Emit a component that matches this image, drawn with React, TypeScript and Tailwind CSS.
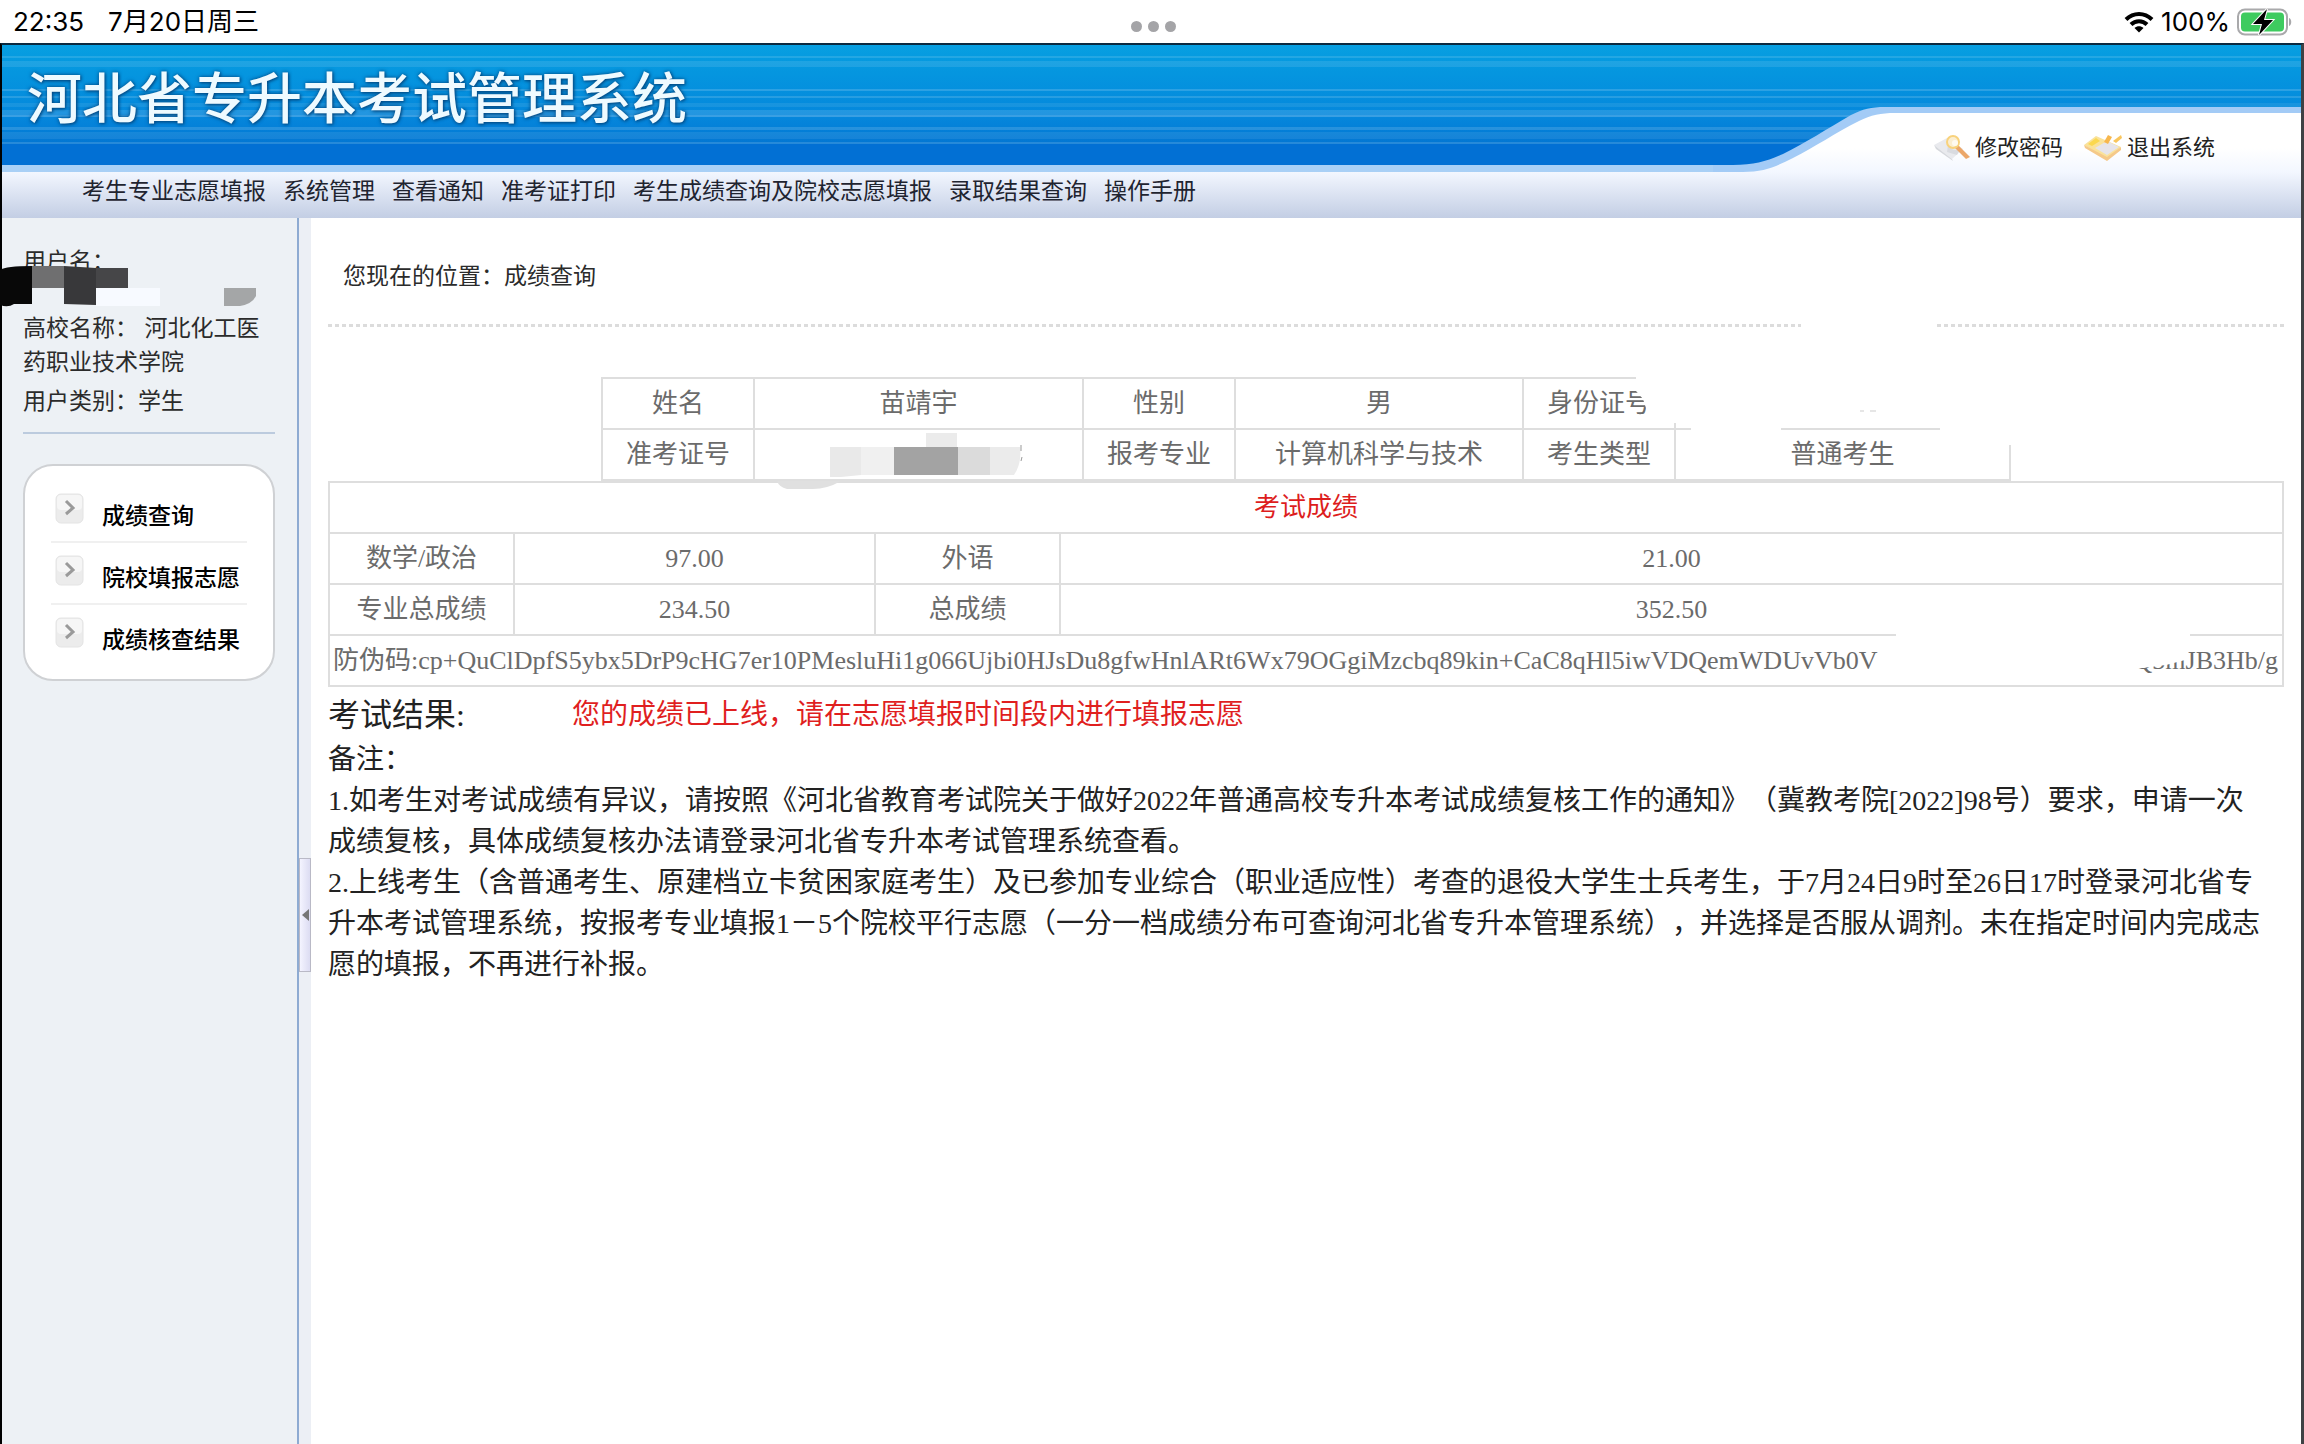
import type { ReactNode } from "react";
import { clsx } from "clsx";

const NAV_ITEMS = [
  "考生专业志愿填报",
  "系统管理",
  "查看通知",
  "准考证打印",
  "考生成绩查询及院校志愿填报",
  "录取结果查询",
  "操作手册",
];

const MENU_ITEMS = ["成绩查询", "院校填报志愿", "成绩核查结果"];

// thin highlights that run across the banner: [top, height, opacity]
const STRIPES = [
  [11, 2, 0.12],
  [16, 6, 0.1],
  [44, 2, 0.16],
  [51, 2, 0.14],
  [58, 4, 0.08],
  [65, 7, 0.12],
  [70, 2, 0.1],
  [82, 3, 0.14],
  [87, 7, 0.08],
  [97, 2, 0.14],
];

function StatusBar() {
  return (
    <div className="grid h-[43px] grid-cols-3 items-start bg-white pr-[11px] pl-[13px] text-[26px] leading-[44px] text-black">
      <div className="flex gap-6">
        <span>22:35</span>
        <span>7月20日周三</span>
      </div>
      <div className="flex justify-center gap-1.5 pt-[21px]">
        <span className="size-[11px] rounded-full bg-[#a4a4a7]" />
        <span className="size-[11px] rounded-full bg-[#a4a4a7]" />
        <span className="size-[11px] rounded-full bg-[#a4a4a7]" />
      </div>
      <div className="flex items-center justify-end gap-[7px]">
        <svg width="30" height="22" viewBox="0 0 30 22" fill="none" stroke="#000" strokeWidth="4">
          <path d="M2 8.5C9.500 1 20.500 1 28 8.500" />
          <path d="M7 13.500C11.500 9 18.500 9 23 13.500" />
          <path d="M15 21.500L10.500 17C13 14.600 17 14.600 19.500 17Z" fill="#000" stroke="none" />
        </svg>
        <span>100%</span>
        <svg width="56" height="28" viewBox="0 0 56 28">
          <rect x="1" y="1.500" width="49" height="25" rx="7" fill="#fff" stroke="#a9a9ab" strokeWidth="2" />
          <rect x="4" y="4.500" width="43" height="19" rx="4" fill="#3ecb5f" />
          <path d="M52 10C55 11 55 17 52 18Z" fill="#a9a9ab" />
          <path d="M30 1L16 16H25L22 27L36 12H27Z" fill="#000" stroke="#fff" strokeWidth="2" paintOrder="stroke" />
        </svg>
      </div>
    </div>
  );
}

function KeyIcon() {
  return (
    <svg width="38" height="28" viewBox="0 0 38 28">
      <path d="M1 12L14 5L30 16L19 26Z" fill="#e9eaee" />
      <path d="M1 12L19 26L20 28L3 16Z" fill="#d6d8dd" />
      <path d="M15 12C18 17 22 18 27 16L24 22L14 19Z" fill="#d9dbe0" />
      <path d="M25 12L37 24L33 26L22 15Z" fill="#eba76a" />
      <circle cx="20" cy="9" r="6" fill="#fbeed0" stroke="#f8d27c" strokeWidth="2" />
      <circle cx="22" cy="10" r="3" fill="#fffaf0" />
    </svg>
  );
}

function ExitIcon() {
  return (
    <svg width="40" height="28" viewBox="0 0 40 28">
      <path d="M1 12L13 3L38 14L24 27Z" fill="#fae29a" />
      <path d="M1 12L24 24L38 14V17L24 28L2 15Z" fill="#f5c98a" />
      <path d="M12 15L24 8L36 14L24 22Z" fill="#e6e4ea" />
      <path d="M5 11L13 5L17 8L9 13Z" fill="#fbd84e" />
      <path d="M21 9L25 2L29 4L25 11Z" fill="#f7b74e" />
      <path d="M30 8L38 2L39 5L33 10Z" fill="#f9c55c" />
    </svg>
  );
}

function HeaderLink({ icon, label }: { icon: ReactNode; label: string }) {
  return (
    <a href="#" className="flex items-center gap-1 text-[22px] leading-7 text-[#222]">
      {icon}
      {label}
    </a>
  );
}

function Header() {
  return (
    <header className="relative">
      <div className="relative h-[127px] border-b-[7px] border-[#a9d0f6] bg-linear-to-b from-[#079fe1] from-0% via-[#0587dc] via-60% to-[#0469cb]">
        <svg className="absolute inset-0 h-[120px] w-full">
          <rect y="99" width="100%" height="21" fill="#0270d4" />
          {STRIPES.map(([y, h, o]) => (
            <rect key={y} y={y} width="100%" height={h} fill="#fff" opacity={o} />
          ))}
        </svg>
      </div>
      {/* raised tab that holds the account links */}
      <svg className="absolute top-0 right-0" width="638" height="127" viewBox="0 0 638 127">
        <defs>
          <linearGradient id="tab" x1="0" y1="0" x2="0" y2="1">
            <stop offset="0.600" stopColor="#fff" />
            <stop offset="1" stopColor="#f3f7ff" />
          </linearGradient>
        </defs>
        <path
          d="M50 120H70C92 120 104 116 120 109C142 98 164 84 188 70C200 64 208 62 222 62H638V127H50Z"
          fill="#a3cbf6"
        />
        <path
          d="M80 127C102 127 114 121 130 113C152 102 172 88 196 76C208 70 218 68 232 68H638V127Z"
          fill="url(#tab)"
        />
      </svg>
      <div className="absolute inset-x-0 top-0 flex h-[127px] justify-between pr-[86px] pl-[25px]">
        <h1 className="pt-[17px] text-[55px] leading-[72px] font-medium text-[#eefaff] [text-shadow:0_0_4px_#044c86,1px_1px_3px_#044c86]">
          河北省专升本考试管理系统
        </h1>
        <div className="flex items-start gap-5 pt-[88px]">
          <HeaderLink icon={<KeyIcon />} label="修改密码" />
          <HeaderLink icon={<ExitIcon />} label="退出系统" />
        </div>
      </div>
      <nav className="flex h-[46px] gap-[17px] bg-linear-to-b from-[#f3f7ff] to-[#c3cee4] pl-20 text-[23px] leading-[38px] text-[#1f2430]">
        {NAV_ITEMS.map((item) => (
          <a key={item} href="#">
            {item}
          </a>
        ))}
      </nav>
    </header>
  );
}

function Sidebar() {
  return (
    <aside className="w-[295px] shrink-0 bg-[#edf1f5] pt-[26px] pr-[22px] pl-[21px] text-[23px] text-[#2b2b2b]">
      <div className="relative h-[67px] leading-[34px]">
        用户名：
        <svg className="absolute top-[22px] -left-[23px]" width="262" height="42" viewBox="0 0 262 42">
          <path d="M0 4Q6 0 32 0V38H14Q8 42 0 39Z" fill="#080808" />
          <path d="M32 0H64V22H32Z" fill="#6f6f70" />
          <path d="M64 0L96 2V39L64 38Z" fill="#38383a" />
          <path d="M96 2H128V22H96Z" fill="#464648" />
          <path d="M96 22H160V40H96Z" fill="#f7faff" />
          <path d="M224 22H256V30Q252 38 240 40H224Z" fill="#a4a6a7" />
        </svg>
      </div>
      <p className="leading-[34px]">高校名称： 河北化工医药职业技术学院</p>
      <p className="mt-[5px] leading-[34px]">用户类别：学生</p>
      <hr className="mt-3.5 border-t-2 border-[#bccbde]" />
      <ul className="mt-[30px] rounded-[30px] border-2 border-[#cfd1d4] bg-white px-[26px] pt-[15px] pb-3 font-medium text-black">
        {MENU_ITEMS.map((item, i) => (
          <li
            key={item}
            className={clsx("h-[62px]", i < MENU_ITEMS.length - 1 && "border-b-2 border-[#f0f0f0]")}
          >
            <a href="#" className="flex gap-[18px] pt-3 pl-1">
              <svg width="29" height="31" viewBox="0 0 29 31" className="shrink-0">
                <rect x="1" y="1" width="27" height="29" rx="5" fill="#ececec" stroke="#e4e4e4" />
                <rect x="2" y="2" width="25" height="15" rx="4" fill="#f6f6f6" />
                <path d="M11 8L18 15L11 21" fill="none" stroke="#9a9a9a" strokeWidth="3" />
              </svg>
              <span className="pt-1.5 leading-[34px] whitespace-nowrap">{item}</span>
            </a>
          </li>
        ))}
      </ul>
    </aside>
  );
}

function Cell({ children, className }: { children?: ReactNode; className?: string }) {
  return <td className={clsx("border-2 border-[#dedede] p-0", className)}>{children}</td>;
}

function Label({ children, className }: { children: ReactNode; className?: string }) {
  return (
    <th scope="row" className={clsx("border-2 border-[#dedede] p-0 font-normal", className)}>
      {children}
    </th>
  );
}

function CandidateTable() {
  return (
    <div className="relative mx-auto w-[1410px]">
      <table className="w-full table-fixed border-collapse text-center">
        <tbody>
          <tr className="h-[51px]">
            <Label className="w-[152px]">姓名</Label>
            <Cell className="w-[329px]">苗靖宇</Cell>
            <Label className="w-[152px]">性别</Label>
            <Cell className="w-[288px]">男</Cell>
            <Label className="w-[152px]">身份证号</Label>
            <Cell />
          </tr>
          <tr className="h-[51px]">
            <Label>准考证号</Label>
            <Cell />
            <Label>报考专业</Label>
            <Cell>计算机科学与技术</Cell>
            <Label>考生类型</Label>
            <Cell>普通考生</Cell>
          </tr>
        </tbody>
      </table>
      {/* blanked-out ID number and pixelated ticket number */}
      <svg className="absolute inset-0 overflow-visible" width="1410" height="104" viewBox="0 0 1410 104">
        <path
          d="M1035 -4V14L1042 22L1048 40V46H1090V58H1180V46H1339V68H1415V-4Z"
          fill="#fff"
        />
        <path d="M1259 34H1263M1269 34H1275" stroke="#e6e6e6" strokeWidth="2" />
        <path d="M325 56H356V70H325Z" fill="#ebebeb" />
        <path d="M229 70H260V98L240 100H229Z" fill="#e9e9e9" />
        <path d="M260 70H293V98H260Z" fill="#f0f0f0" />
        <path d="M293 70H357V98H293Z" fill="#a3a3a3" />
        <path d="M357 70H389V98H357Z" fill="#dbdbdb" />
        <path d="M389 70H419Q421 86 413 98H389Z" fill="#ebebeb" />
        <path d="M420 68V74M421 80L420 84" stroke="#999" strokeWidth="1" />
        <path d="M176 104H240Q226 112 212 112H186Q178 110 176 104Z" fill="#e0e0e0" />
      </svg>
    </div>
  );
}

function ScoreTable() {
  return (
    <table className="w-full table-fixed border-collapse text-center">
      <colgroup>
        <col className="w-[185px]" />
        <col className="w-[361px]" />
        <col className="w-[185px]" />
        <col />
      </colgroup>
      <tbody>
        <tr className="h-[51px]">
          <th colSpan={4} className="border-2 border-[#dedede] p-0 font-normal text-[#dd1d1d]">
            考试成绩
          </th>
        </tr>
        <tr className="h-[51px]">
          <Label>数学/政治</Label>
          <Cell>97.00</Cell>
          <Label>外语</Label>
          <Cell>21.00</Cell>
        </tr>
        <tr className="h-[51px]">
          <Label>专业总成绩</Label>
          <Cell>234.50</Cell>
          <Label>总成绩</Label>
          <Cell>352.50</Cell>
        </tr>
        <tr className="h-[51px]">
          <td colSpan={4} className="border-2 border-[#dedede] p-0">
            <div className="relative flex justify-between pr-1 pl-[3px] whitespace-nowrap">
              <span>
                防伪码:cp+QuClDpfS5ybx5DrP9cHG7er10PMesluHi1g066Ujbi0HJsDu8gfwHnlARt6Wx79OGgiMzcbq89kin+CaC8qHl5iwVDQemWDUvVb0V
              </span>
              <span>Q3mJB3Hb/g</span>
              <svg className="absolute -top-3 right-0" width="386" height="50" viewBox="0 0 386 50">
                <path d="M0 0H294V16L289 28L270 33L246 36L224 38V50H0Z" fill="#fff" />
              </svg>
            </div>
          </td>
        </tr>
      </tbody>
    </table>
  );
}

export default function App() {
  return (
    <div className="flex min-h-screen flex-col bg-white font-['Inter','Noto_Sans_CJK_SC',sans-serif]">
      <StatusBar />
      <div className="flex grow flex-col border-t-2 border-r-[3px] border-l-2 border-t-[#0b2a40] border-r-[#3f4144] border-l-black">
        <Header />
        <div className="flex grow">
          <Sidebar />
          <div className="w-3.5 shrink-0 border-l-2 border-[#8eabd2] bg-[#eceff5] pt-[640px]">
            <button
              type="button"
              aria-label="收起菜单"
              className="flex h-[114px] w-full items-center justify-center border border-[#b9b9c6] bg-linear-to-r from-[#f4f4ff] to-[#dcdcf2]"
            >
              <svg width="7" height="12" viewBox="0 0 7 12">
                <path d="M7 0V12L0 6Z" fill="#777" />
              </svg>
            </button>
          </div>
          <main className="min-w-0 grow px-[17px] font-['Liberation_Serif','Noto_Sans_CJK_SC',serif] [text-spacing-trim:space-all]">
            <p className="px-[15px] pt-[42px] text-[23px] leading-[34px] text-[#2b2b2b]">
              您现在的位置：成绩查询
            </p>
            <div className="mt-[30px] mb-[50px] flex justify-between">
              <div className="h-[3px] grow bg-[repeating-linear-gradient(to_right,#dcdcdc_0_4px,transparent_4px_7px)]" />
              <div className="ml-[136px] h-[3px] w-[347px] bg-[repeating-linear-gradient(to_right,#dcdcdc_0_4px,transparent_4px_7px)]" />
            </div>
            <div className="text-[26px] leading-[34px] text-[#6b6b6b]">
              <CandidateTable />
              <ScoreTable />
            </div>
            <div className="flex items-center gap-[107px] pt-1 leading-[48px]">
              <h2 className="text-[32px] text-[#222]">考试结果:</h2>
              <p className="text-[28px] text-[#e01f1f]">
                您的成绩已上线，请在志愿填报时间段内进行填报志愿
              </p>
            </div>
            <div className="text-[28px] leading-[41px] text-[#222]">
              <p>备注：</p>
              <p>
                1.如考生对考试成绩有异议，请按照《河北省教育考试院关于做好2022年普通高校专升本考试成绩复核工作的通知》（冀教考院[2022]98号）要求，申请一次
                <br />
                成绩复核，具体成绩复核办法请登录河北省专升本考试管理系统查看。
              </p>
              <p>
                2.上线考生（含普通考生、原建档立卡贫困家庭考生）及已参加专业综合（职业适应性）考查的退役大学生士兵考生，于7月24日9时至26日17时登录河北省专
                <br />
                升本考试管理系统，按报考专业填报1－5个院校平行志愿（一分一档成绩分布可查询河北省专升本管理系统），并选择是否服从调剂。未在指定时间内完成志
                <br />
                愿的填报，不再进行补报。
              </p>
            </div>
          </main>
        </div>
      </div>
    </div>
  );
}
